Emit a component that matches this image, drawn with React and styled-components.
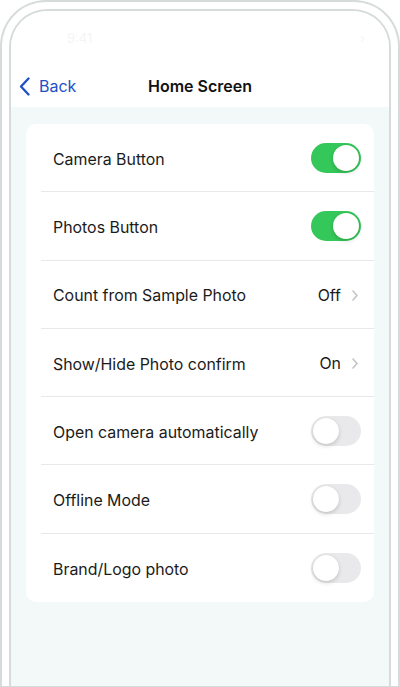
import React, { useState } from "react";
import styled, { createGlobalStyle } from "styled-components";

const Global = createGlobalStyle`
  html, body { margin: 0; padding: 0; background: #fff; }
  body { font-family: Inter, "Noto Sans", sans-serif; -webkit-font-smoothing: antialiased; }
  * { box-sizing: border-box; }
`;

const Device = styled.div`
  width: 400px;
  height: 687px;
  border: 2px solid #d6dbdb;
  border-bottom: 1px solid #d6dbdb;
  border-radius: 46px 46px 0 0;
  padding: 7px 7px 0 7px;
  background: #fff;
`;

const Screen = styled.div`
  height: 100%;
  border: 2px solid #d6dbdb;
  border-bottom: none;
  border-radius: 38px 38px 0 0;
  overflow: hidden;
  display: flex;
  flex-direction: column;
  background: #f3f8f8;
`;

const StatusBar = styled.div`
  height: 54px;
  background: #fff;
  display: flex;
  align-items: center;
  justify-content: space-between;
  padding: 0 24px 0 56px;
  font-size: 13px;
  color: #f5f5f5;
`;

const NavBar = styled.div`
  height: 42px;
  background: #fff;
  display: grid;
  grid-template-columns: 1fr auto 1fr;
  align-items: center;
  padding: 0 8px;
`;

const BackButton = styled.button`
  border: none;
  background: none;
  padding: 0;
  display: flex;
  align-items: center;
  gap: 9px;
  color: #2150c6;
  font-family: inherit;
  font-size: 16px;
  justify-self: start;
  cursor: pointer;
`;

const Title = styled.div`
  font-size: 16px;
  font-weight: 600;
  color: #111;
`;

const Content = styled.div`
  flex: 1;
  padding: 17px 15px 0;
`;

const Card = styled.div`
  background: #fff;
  border-radius: 10px;
  padding-left: 15px;
`;

const Row = styled.div`
  height: 68.3px;
  display: flex;
  align-items: center;
  justify-content: space-between;
  padding: 0 13px 0 12px;
  border-bottom: ${(p) => (p.$last ? "none" : "1px solid #e8e8ea")};
`;

const Label = styled.span`
  font-size: 15.9px;
  color: #1b1b1b;
  padding-top: 3px;
`;

const Value = styled.span`
  display: flex;
  align-items: center;
  gap: 11px;
  font-size: 15.9px;
  color: #1b1b1b;
  margin-right: 3px;
  padding-top: 2px;
`;

const Switch = styled.button`
  width: 50px;
  height: 30px;
  border-radius: 15px;
  border: none;
  padding: 2px;
  display: flex;
  justify-content: ${(p) => (p.$on ? "flex-end" : "flex-start")};
  background: ${(p) => (p.$on ? "#34c759" : "#e9e9eb")};
  cursor: pointer;
`;

const Knob = styled.span`
  width: 26px;
  height: 26px;
  border-radius: 50%;
  background: #fff;
  box-shadow: 0 2px 4px rgba(0, 0, 0, 0.15), 0 0 1px rgba(0, 0, 0, 0.12);
`;

const Chevron = () => (
  <svg width="6" height="11" viewBox="0 0 6 11" fill="none">
    <path d="M1 1l4 4.5L1 10" stroke="#c4c4c7" strokeWidth="1.6" strokeLinecap="round" strokeLinejoin="round" />
  </svg>
);

const BackChevron = () => (
  <svg width="11" height="19" viewBox="0 0 11 19" fill="none">
    <path d="M9.5 1.5L2 9.5l7.5 8" stroke="#2150c6" strokeWidth="2.3" strokeLinecap="round" strokeLinejoin="round" />
  </svg>
);

const initial = [
  { label: "Camera Button", type: "switch", on: true },
  { label: "Photos Button", type: "switch", on: true },
  { label: "Count from Sample Photo", type: "link", value: "Off" },
  { label: "Show/Hide Photo confirm", type: "link", value: "On" },
  { label: "Open camera automatically", type: "switch", on: false },
  { label: "Offline Mode", type: "switch", on: false },
  { label: "Brand/Logo photo", type: "switch", on: false },
];

export default function App() {
  const [rows, setRows] = useState(initial);

  const flip = (i) =>
    setRows((r) => r.map((row, j) => (j === i ? { ...row, on: !row.on } : row)));

  return (
    <>
      <Global />
      <Device>
        <Screen>
          <StatusBar>
            <span>9:41</span>
            <span>›</span>
          </StatusBar>
          <NavBar>
            <BackButton>
              <BackChevron />
              Back
            </BackButton>
            <Title>Home Screen</Title>
            <span />
          </NavBar>
          <Content>
            <Card>
              {rows.map((row, i) => (
                <Row key={row.label} $last={i === rows.length - 1}>
                  <Label>{row.label}</Label>
                  {row.type === "switch" ? (
                    <Switch $on={row.on} onClick={() => flip(i)}>
                      <Knob />
                    </Switch>
                  ) : (
                    <Value>
                      {row.value}
                      <Chevron />
                    </Value>
                  )}
                </Row>
              ))}
            </Card>
          </Content>
        </Screen>
      </Device>
    </>
  );
}
